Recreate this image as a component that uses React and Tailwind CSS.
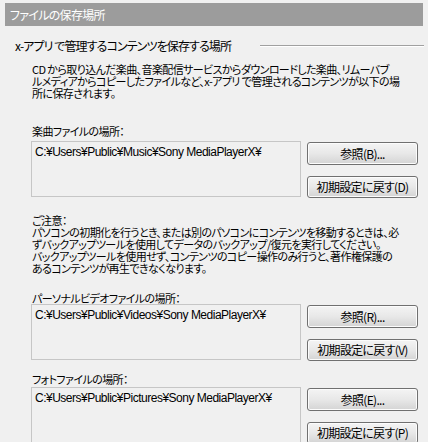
const jp = "font-['Noto_Sans_CJK_JP','Noto_Sans',sans-serif] [font-feature-settings:'palt']";

function Btn({ children, className = "" }) {
  return (
    <button
      className={`w-[111px] whitespace-nowrap rounded-[3px] border border-[#707070] bg-gradient-to-b from-[#f4f4f4] via-[#e8e8e8] to-[#d4d4d4] text-[12px] leading-none tracking-[-0.7px] text-black shadow-[inset_0_0_0_1px_#fcfcfc] ${className}`}
    >
      {children}
    </button>
  );
}

function PathRow({ path, browse, reset }) {
  return (
    <div className="flex gap-[6px] pl-[31px]">
      <div className="h-[56px] w-[270px] border border-[#c6c6c6] bg-[#f0f0f0] px-[3px] pt-[3px] font-['Liberation_Sans',sans-serif] text-[12px] leading-[14px] tracking-[-0.5px]">
        {path}
      </div>
      <div className="flex flex-col">
        <Btn className="mt-[1px] h-[23px]">{browse}</Btn>
        <Btn className="mt-[11px] h-[22px]">{reset}</Btn>
      </div>
    </div>
  );
}

export default function App() {
  return (
    <div className={`h-[442px] w-[428px] overflow-hidden whitespace-nowrap bg-[#f0f0f0] pt-[3px] text-[11px] leading-[12px] tracking-[-0.6px] text-black ${jp}`}>
      <div className="mx-[5px] flex h-[23px] items-center bg-[#9c9c9c] pl-[5px] text-[12px] tracking-[-0.7px] text-white">
        ファイルの保存場所
      </div>

      <div className="mt-[14px] flex items-center pl-[15px] pr-[4px]">
        <span className="text-[12px] tracking-[-0.9px]">x-アプリ で管理するコンテンツを保存する場所</span>
        <div className="ml-[29px] h-[2px] flex-1 border-t border-b border-t-[#a0a0a0] border-b-white" />
      </div>

      <p className="mt-[11px] pl-[32px]">
        CD から取り込んだ楽曲、音楽配信サービスからダウンロードした楽曲、リムーバブ
        <br />
        ルメディアからコピーしたファイルなど、x-アプリ で管理されるコンテンツが以下の場
        <br />
        所に保存されます。
      </p>

      <div className="mt-[26px] pl-[32px]">楽曲ファイルの場所：</div>
      <div className="mt-[4px]">
        <PathRow
          path="C:¥Users¥Public¥Music¥Sony MediaPlayerX¥"
          browse="参照(B)..."
          reset="初期設定に戻す(D)"
        />
      </div>

      <p className="mt-[16px] pl-[32px]">
        ご注意：
        <br />
        パソコンの初期化を行うとき、または別のパソコンにコンテンツを移動するときは、必
        <br />
        ずバックアップツールを使用してデータのバックアップ/復元を実行してください。
        <br />
        バックアップツールを使用せず、コンテンツのコピー操作のみ行うと、著作権保護の
        <br />
        あるコンテンツが再生できなくなります。
      </p>

      <div className="mt-[18px] pl-[32px]">パーソナルビデオファイルの場所：</div>
      <div className="mt-[0px]">
        <PathRow
          path="C:¥Users¥Public¥Videos¥Sony MediaPlayerX¥"
          browse="参照(R)..."
          reset="初期設定に戻す(V)"
        />
      </div>

      <div className="mt-[12px] pl-[32px]">フォトファイルの場所：</div>
      <div className="mt-[2px]">
        <PathRow
          path="C:¥Users¥Public¥Pictures¥Sony MediaPlayerX¥"
          browse="参照(E)..."
          reset="初期設定に戻す(P)"
        />
      </div>
    </div>
  );
}
